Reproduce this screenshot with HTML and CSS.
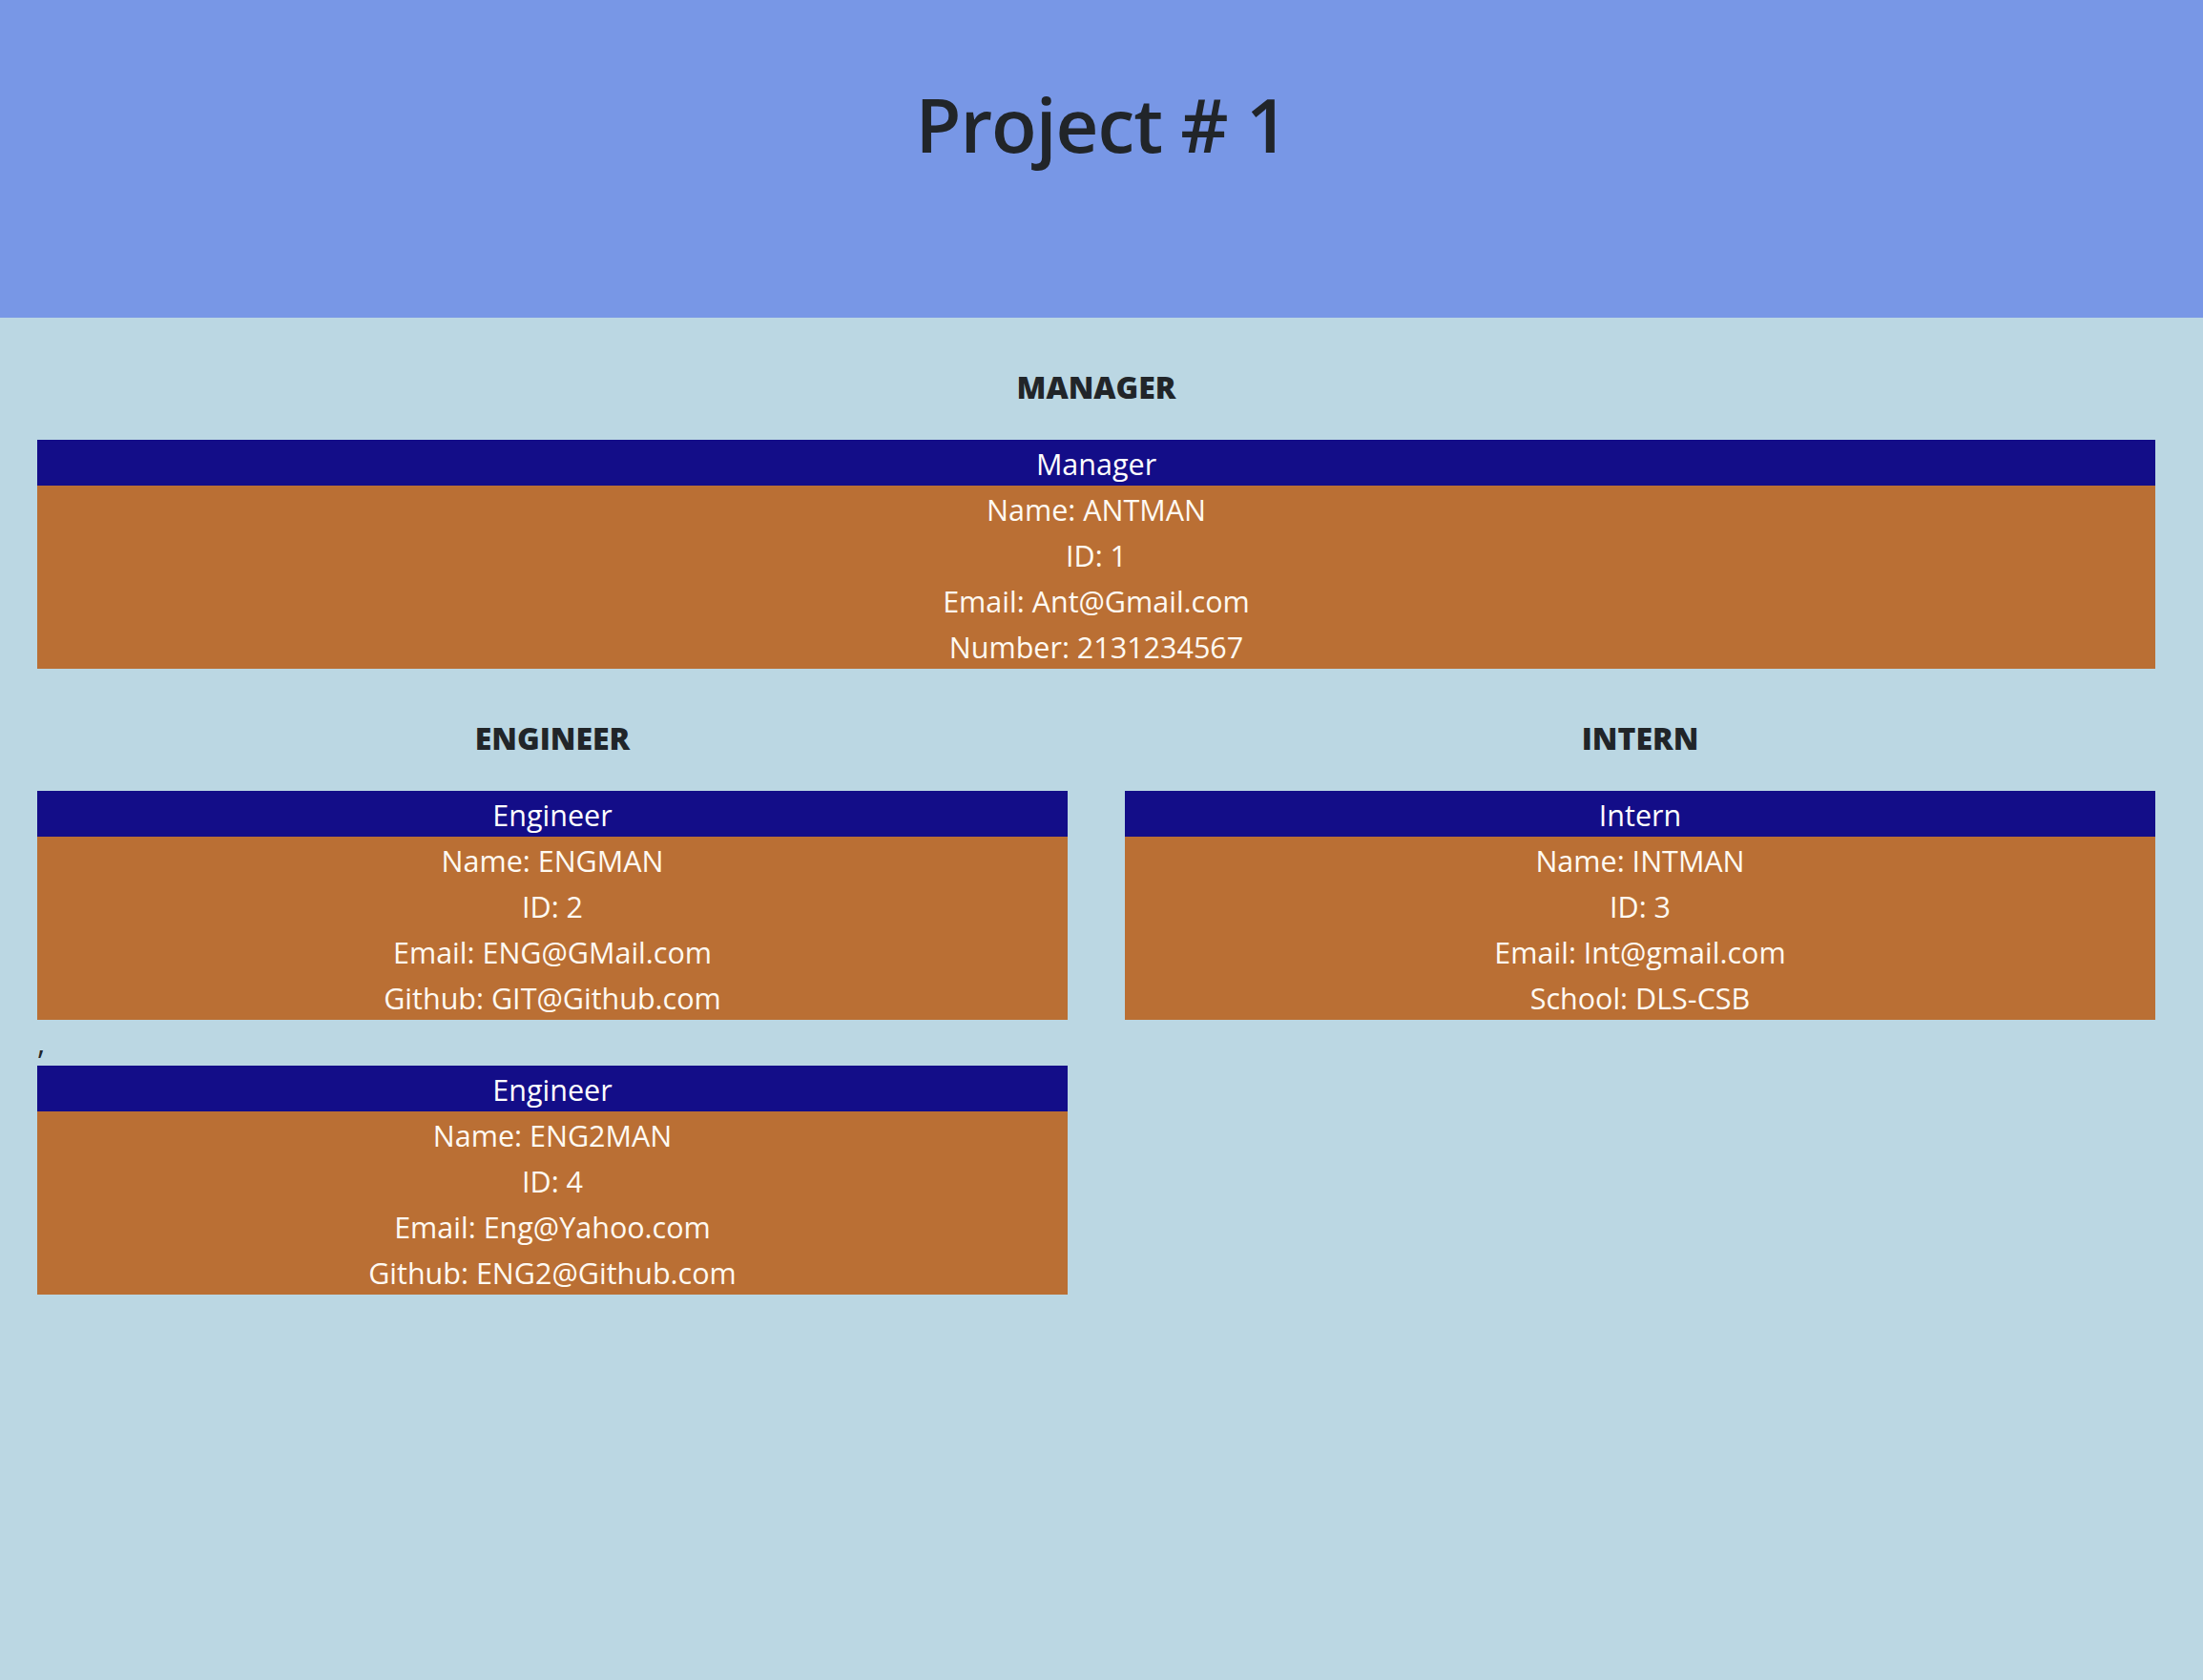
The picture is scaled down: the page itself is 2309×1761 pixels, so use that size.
FILE: index.html
```html
<!DOCTYPE html>
<html lang="en">
<head>
<meta charset="utf-8">
<title>Team Profile</title>
<link rel="stylesheet" href="styles.css">
</head>
<body>
<header class="hero">
  <h1 class="hero-title">Project # 1</h1>
</header>
<main class="team">
  <section class="group">
    <h2 class="group-title">MANAGER</h2>
    <div class="card">
      <div class="card-head">Manager</div>
      <ul class="card-body">
        <li>Name: ANTMAN</li>
        <li>ID: 1</li>
        <li>Email: Ant@Gmail.com</li>
        <li>Number: 2131234567</li>
      </ul>
    </div>
  </section>
  <div class="row">
    <section class="group col">
      <h2 class="group-title">ENGINEER</h2>
      <div class="card">
        <div class="card-head">Engineer</div>
        <ul class="card-body">
          <li>Name: ENGMAN</li>
          <li>ID: 2</li>
          <li>Email: ENG@GMail.com</li>
          <li>Github: GIT@Github.com</li>
        </ul>
      </div>,<div class="card">
        <div class="card-head">Engineer</div>
        <ul class="card-body">
          <li>Name: ENG2MAN</li>
          <li>ID: 4</li>
          <li>Email: Eng@Yahoo.com</li>
          <li>Github: ENG2@Github.com</li>
        </ul>
      </div>
    </section>
    <section class="group col">
      <h2 class="group-title">INTERN</h2>
      <div class="card">
        <div class="card-head">Intern</div>
        <ul class="card-body">
          <li>Name: INTMAN</li>
          <li>ID: 3</li>
          <li>Email: Int@gmail.com</li>
          <li>School: DLS-CSB</li>
        </ul>
      </div>
    </section>
  </div>
</main>
</body>
</html>
```

FILE: styles.css
```css
* { box-sizing: border-box; }

html, body {
  margin: 0;
  padding: 0;
}

body {
  background: #bbd7e3;
  color: #212529;
  font-family: "Open Sans", "Noto Sans", "Liberation Sans", sans-serif;
  font-size: 32px;
  line-height: 48px;
  min-height: 1761px;
}

.hero {
  background: #7897e6;
  height: 333px;
  padding-top: 82px;
  text-align: center;
}

.hero-title {
  margin: 0;
  font-size: 78px;
  line-height: 96px;
  font-weight: 600;
  letter-spacing: -1px;
  color: #212529;
}

.team {
  padding: 0 50px 0 39px;
}

.group {
  padding-top: 49px;
}

.group-title {
  margin: 0 0 31px;
  text-align: center;
  font-size: 32px;
  line-height: 48px;
  font-weight: 800;
  color: #212529;
}

.row {
  display: flex;
  gap: 60px;
}

.col {
  flex: 1 1 0;
  min-width: 0;
}

.card {
  text-align: center;
  font-size: 30.5px;
}

.card-head {
  background: #130d88;
  color: #ffffff;
  height: 48px;
  padding-top: 3px;
  line-height: 45px;
}

.card-body {
  list-style: none;
  margin: 0;
  padding: 0;
  background: #ba6f34;
  color: #fffaf2;
}

.card-body li {
  height: 48px;
  padding-top: 3px;
  line-height: 45px;
}
```
